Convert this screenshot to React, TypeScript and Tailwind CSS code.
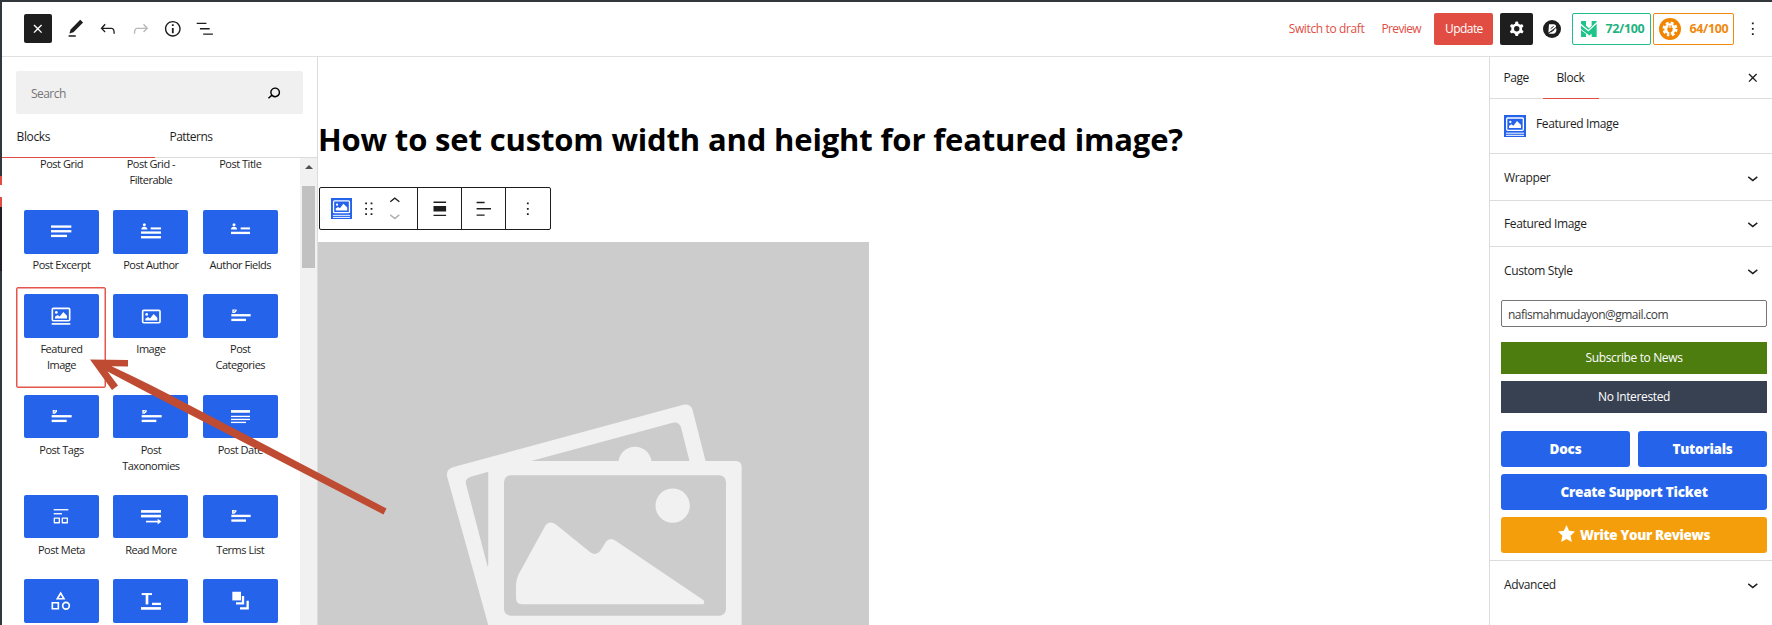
import type { ReactNode } from "react";

const P = {
  close: "M12 13.06l3.712 3.713 1.061-1.06L13.061 12l3.712-3.712-1.06-1.06L12 10.938 8.288 7.227l-1.061 1.06L10.939 12l-3.712 3.712 1.06 1.061L12 13.061z",
  edit: "M20.1 5.1L16.9 2 6.2 12.7l-1.3 4.4 4.5-1.3 10.7-10.7zM4 20.8h8v-1.5H4v1.5z",
  undo: "M18.3 11.7c-.6-.6-1.4-.9-2.3-.9H6.7l2.9-3.3-1.1-1-4.5 5L8.5 16l1-1-2.7-2.7H16c.5 0 .9.2 1.3.5 1 1 1 3.4 1 4.5v.3h1.5v-.2c0-1.5 0-4.3-1.5-5.7z",
  redo: "M15.6 6.5l-1.1 1 2.9 3.3H8c-.9 0-1.7.3-2.3.9-1.4 1.5-1.4 4.2-1.4 5.6v.2h1.5v-.3c0-1.1 0-3.5 1-4.5.3-.3.7-.5 1.3-.5h9.2L14.5 15l1.1 1.1 4.6-4.6-4.6-5z",
  info: "M12 3.2c-4.8 0-8.8 3.9-8.8 8.8 0 4.8 3.9 8.8 8.8 8.8 4.8 0 8.8-3.9 8.8-8.8 0-4.8-4-8.8-8.8-8.8zm0 16c-4 0-7.2-3.3-7.2-7.2C4.8 8 8 4.8 12 4.8s7.2 3.3 7.2 7.2c0 4-3.2 7.2-7.2 7.2zM11 17h2v-6h-2v6zm0-8h2V7h-2v2z",
  list: "M13.8 5.2H3v1.5h10.8V5.2zm-3.6 12v1.5H21v-1.5H10.2zm7.2-6H6.6v1.5h10.8v-1.5z",
  search: "M13.5 6C10.5 6 8 8.5 8 11.5c0 1.1.3 2.1.9 3l-3.4 3 1 1.1 3.4-2.9c1 .9 2.2 1.4 3.6 1.4 3 0 5.5-2.5 5.5-5.5C19 8.5 16.5 6 13.5 6zm0 9.5c-2.2 0-4-1.8-4-4s1.8-4 4-4 4 1.8 4 4-1.8 4-4 4z",
  down: "M17.5 11.6L12 16l-5.5-4.4.9-1.2L12 14l4.5-3.6 1 1.2z",
  up: "M6.5 12.4L12 8l5.5 4.4-.9 1.2L12 10l-4.5 3.6-1-1.2z",
  more: "M13 19h-2v-2h2v2zm0-6h-2v-2h2v2zm0-6h-2V5h2v2z",
  drag: "M8 7h2V5H8v2zm0 6h2v-2H8v2zm0 6h2v-2H8v2zm6-14v2h2V5h-2zm0 8h2v-2h-2v2zm0 6h2v-2h-2v2z",
  alignNone: "M19 5.5H5V4h14v1.5ZM19 20H5v-1.5h14V20ZM5 9h14v6H5V9Z",
  alignLeft: "M4 19.8h8.9v-1.5H4v1.5zm8.9-15.6H4v1.5h8.9V4.2zm-8.9 7v1.5h16v-1.5H4z",
  cog: "M10.289 4.836A1 1 0 0111.275 4h1.306a1 1 0 01.987.836l.244 1.466c.787.26 1.503.679 2.108 1.218l1.393-.522a1 1 0 011.216.437l.653 1.13a1 1 0 01-.23 1.273l-1.148.944a6.025 6.025 0 010 2.435l1.149.946a1 1 0 01.23 1.272l-.653 1.13a1 1 0 01-1.216.437l-1.394-.522c-.605.54-1.32.958-2.108 1.218l-.244 1.466a1 1 0 01-.987.836h-1.306a1 1 0 01-.986-.836l-.244-1.466a5.995 5.995 0 01-2.108-1.218l-1.394.522a1 1 0 01-1.217-.436l-.653-1.131a1 1 0 01.23-1.272l1.149-.946a6.026 6.026 0 010-2.435l-1.148-.944a1 1 0 01-.23-1.272l.653-1.131a1 1 0 011.217-.437l1.393.522a5.994 5.994 0 012.108-1.218l.244-1.466zM14.929 12a3 3 0 11-6 0 3 3 0 016 0z",
};

function Icon({ d, className = "" }: { d: string; className?: string }) {
  return (
    <svg viewBox="0 0 24 24" className={`h-[21.6px] w-[21.6px] shrink-0 ${className}`} fill="currentColor" fillRule="evenodd">
      <path d={d} />
    </svg>
  );
}

function FeaturedIcon({ className = "" }: { className?: string }) {
  return (
    <svg viewBox="0 0 66 66" className={`shrink-0 ${className}`}>
      <rect width="66" height="66" fill="#2563eb" />
      <rect x="8" y="9" width="50" height="37" rx="3" fill="none" stroke="#fff" strokeWidth="4" />
      <circle cx="19" cy="21" r="3.5" fill="#fff" />
      <path d="M15 39v-6l7-5 6 4 11-14 12 12v9z" fill="#fff" />
      <path d="M6 54.5h54M6 61h54" stroke="#fff" strokeWidth="3" />
    </svg>
  );
}

const bars = (...r: number[][]) => r.map(([x, y, w, h], i) => <rect key={i} x={x} y={y} width={w} height={h} />);
const person = (x: number) => (
  <>
    <circle cx={x} cy="44" r="4.5" />
    <path d={`M${x - 9} 58q0-8 9-8t9 8z`} />
  </>
);
const tag = (x: number, y: number) => (
  <>
    <path d={`M${x} ${y + 1}h13v5l-6 6h-7z`} />
    <path d={`M${x + 4} ${y + 8}l5-6`} stroke="#2563eb" strokeWidth="2" />
  </>
);
const picture = (x: number, y: number) => (
  <>
    <rect x={x} y={y} width="52" height="37" rx="3" fill="none" stroke="#fff" strokeWidth="5" />
    <circle cx={x + 12} cy={y + 12} r="4" />
    <path d={`M${x + 8} ${y + 30}v-5l8-5 6 4 11-13 11 11v8z`} />
  </>
);

type Item = { label: string[]; icon: ReactNode; selected?: boolean };
const items: Item[] = [
  { label: ["Post Excerpt"], icon: bars([81, 46, 61, 7], [81, 60, 61, 7], [81, 74, 48, 7]) },
  { label: ["Post Author"], icon: <>{person(94)}{bars([113, 52, 31, 6], [84, 64, 60, 7], [84, 78, 60, 7])}</> },
  { label: ["Author Fields"], icon: <>{person(93)}{bars([113, 52, 28, 6], [84, 65, 57, 7])}</> },
  { label: ["Featured", "Image"], selected: true, icon: <>{picture(85, 43)}{bars([83, 87, 56, 5])}</> },
  { label: ["Image"], icon: picture(89, 49) },
  { label: ["Post", "Categories"], icon: <>{tag(88, 45)}{bars([85, 60, 58, 7], [85, 74, 44, 7])}</> },
  { label: ["Post Tags"], icon: <>{tag(86, 44)}{bars([83, 60, 60, 7], [83, 74, 45, 7])}</> },
  { label: ["Post", "Taxonomies"], icon: <>{tag(88, 44)}{bars([86, 60, 60, 7], [86, 74, 44, 7])}</> },
  { label: ["Post Date"], icon: bars([84, 45, 57, 8], [84, 62, 57, 4], [84, 71, 57, 4], [84, 80, 45, 4]) },
  { label: ["Post Meta"], icon: <>{bars([89, 42, 44, 4], [89, 54, 25, 4])}<path d="M91 69h15v14H91zM115 69h15v14h-15z" fill="none" stroke="#fff" strokeWidth="4" strokeLinejoin="round" /></> },
  { label: ["Read More"], icon: <>{bars([84, 45, 60, 8], [84, 59, 60, 8], [99, 77, 40, 5])}<path d="M134 71l11 8.500-11 8.500z" /></> },
  { label: ["Terms List"], icon: <>{tag(87, 44)}{bars([85, 59, 58, 7], [85, 73, 44, 7])}</> },
  { label: [], icon: <path d="M110 42l-10 17h20zM85 71h18v18H85zM116 80a10 10 0 1 0 20 0a10 10 0 1 0-20 0z" fill="none" stroke="#fff" strokeWidth="5" /> },
  { label: [], icon: bars([86, 42, 31, 6], [98, 42, 8, 34], [117, 71, 27, 7], [84, 84, 60, 8]) },
  { label: [], icon: <>{bars([88, 38, 26, 26])}<path d="M120 51v22H99M134 65v23h-23" fill="none" stroke="#fff" strokeWidth="7" /></> },
];

function Lines({ lines }: { lines: string[] }) {
  return (
    <div className="text-center text-[11px] leading-4 tracking-[-0.48px] text-[#1e1e1e]">
      {lines.map((l) => <div key={l} className="whitespace-nowrap">{l}</div>)}
    </div>
  );
}

function Panel({ title, className = "" }: { title: string; className?: string }) {
  return (
    <div className={`flex items-center justify-between pl-[14px] pr-2 ${className}`}>
      <span className="pt-px">{title}</span>
      <Icon d={P.down} className="mt-px" />
    </div>
  );
}

export default function App() {
  return (
    <div className="relative flex h-[625px] w-[1772px] flex-col overflow-hidden border-t-2 border-[#32373c] bg-white font-['Open_Sans','Noto_Sans',sans-serif] text-[12px] tracking-[-0.37px] text-[#1e1e1e]">
      <div className="flex min-h-0 flex-1">
        <div className="flex w-[2px] shrink-0 flex-col bg-[#32373c]">
          <div className="h-[174px]" />
          <div className="h-[9px] bg-[#e14d43]" />
          <div className="h-[12px] bg-white" />
          <div className="h-[10px] bg-[#e14d43]" />
          <div className="h-[64px] bg-[#1d2127]" />
        </div>

        <div className="flex min-w-0 flex-1 flex-col">
          <header className="flex h-[55px] shrink-0 items-center border-b border-[#e0e0e0] pl-[22px]">
            <button className="-mt-px flex h-[29px] w-7 items-center justify-center rounded-[2px] bg-[#1e1e1e] text-white">
              <Icon d={P.close} className="mt-px" />
            </button>
            <div className="ml-[7.500px] flex">
              {[P.edit, P.undo, P.redo, P.info, P.list].map((d, i) => (
                <span key={d} className={`flex w-[32.4px] justify-center ${i === 2 ? "text-[#b8b8b8]" : ""}`}>
                  <Icon d={d} />
                </span>
              ))}
            </div>
            <div className="ml-auto flex items-center">
              <span className="mr-[17px] text-[#e14d43]">Switch to draft</span>
              <span className="mr-[13px] w-[40px] tracking-[-0.62px] text-[#e14d43]">Preview</span>
              <button className="mr-[7px] h-8 w-[59px] rounded-[2px] bg-[#e14d43] tracking-[-0.55px] text-white">Update</button>
              <button className="mr-[10px] flex h-8 w-[33px] items-center justify-center rounded-[2px] bg-[#1e1e1e] text-white">
                <Icon d={P.cog} />
              </button>
              <svg viewBox="0 0 54 54" className="mr-[11px] h-[18px] w-[18px]">
                <circle cx="27" cy="27" r="27" fill="#1e1e1e" />
                <path d="M18 13h14q8 1 7 8l-23 17zM39 24q2 3 1 8-2 9-10 9H17z" fill="#fff" />
                <path d="M23 26l9-7M24 36l10-7" stroke="#1e1e1e" strokeWidth="3" />
              </svg>
              <div className="mr-[2px] flex h-8 w-[79px] items-center rounded-[2px] border border-[#1fbf86] pl-[8px] text-[#1fb381]">
                <svg viewBox="0 0 48 48" className="h-4 w-4" fill="#1fc48b">
                  <path d="M0 0h15v14l9 8 8-8V0h15v48H32V38l-8 6-9-6v10H0z" />
                  <path d="M-2 9l24 20L50 3" fill="none" stroke="#fff" strokeWidth="4" />
                  <path d="M-2 24l26 20" fill="none" stroke="#fff" strokeWidth="3" />
                </svg>
                <span className="ml-[8px] text-[12.5px] font-bold tracking-[-0.32px]">72/100</span>
              </div>
              <div className="mr-[8px] flex h-8 w-[81px] items-center rounded-[2px] border border-[#f08a0c] pl-[5px] text-[#ef8a10]">
                <svg viewBox="0 0 66 66" className="h-[22px] w-[22px]">
                  <circle cx="33" cy="33" r="33" fill="#f18500" />
                  <circle cx="33" cy="33" r="17" fill="#fff" />
                  <circle cx="33" cy="33" r="19" fill="none" stroke="#fff" strokeWidth="7" strokeDasharray="8.500 6.420" />
                  <path d="M25 29h16v7q-1 6-6 7v14h-4V43q-5-1-6-7zM28 22h3v7h-3zM35 22h3v7h-3z" fill="#f18500" />
                </svg>
                <span className="ml-[8px] text-[12.5px] font-bold tracking-[-0.32px]">64/100</span>
              </div>
              <Icon d={P.more} className="mr-[8px]" />
            </div>
          </header>

          <div className="flex min-h-0 flex-1">
            <aside className="flex w-[316px] shrink-0 flex-col border-r border-[#dcdcdc]">
              <div className="ml-[14px] mr-[14px] mt-[14px] flex h-[43px] shrink-0 items-center justify-between rounded-[2px] bg-[#f0f0f0] pl-[15px] pr-[18px]">
                <span className="pt-0.5 tracking-[-0.55px] text-[#757575]">Search</span>
                <Icon d={P.search} className="text-black" />
              </div>
              <div className="flex h-[44px] shrink-0 border-b border-[#dcdcdc]">
                <div className="-mb-px w-[153px] border-b-[1.5px] border-[#e14d43] pl-[14.500px] pt-[14px]">Blocks</div>
                <div className="pl-[14.500px] pt-[14px] tracking-[-0.52px]">Patterns</div>
              </div>
              <div className="flex min-h-0 flex-1">
                <div className="flex-1 pl-[22px]">
                  <div className="-mt-[2px] grid h-[54px] grid-cols-[75px_75px_75px] gap-x-[14.400px]">
                    <Lines lines={["Post Grid"]} />
                    <Lines lines={["Post Grid -", "Filterable"]} />
                    <Lines lines={["Post Title"]} />
                  </div>
                  <div className="grid grid-cols-[75px_75px_75px] gap-x-[14.400px]">
                    {items.map((it, i) => (
                      <div key={i} className="relative pb-[21.1px]">
                        {it.selected && <div className="absolute -left-[8px] -top-[7px] h-[101px] w-[90px] rounded-[2px] border-[1.5px] border-[#e5554c] shadow-[inset_0_0_0_0.5px_#e5554c]" />}
                        <svg viewBox="0 0 225 130" className="mb-[3.700px] block h-[43.5px] w-[75px] rounded-[2px] bg-[#2563eb]" fill="#fff">
                          {it.icon}
                        </svg>
                        <Lines lines={it.label} />
                      </div>
                    ))}
                  </div>
                </div>
                <div className="flex w-[17px] shrink-0 flex-col items-center bg-[#f1f1f1] pt-[7px]">
                  <svg viewBox="0 0 8 4" className="h-1 w-2 shrink-0" fill="#505050"><path d="M0 4L4 0l4 4z" /></svg>
                  <div className="mt-[17px] h-[82px] w-[13px] bg-[#c1c1c1]" />
                </div>
              </div>
            </aside>

            <main className="flex min-w-0 flex-1 flex-col">
              <h1 className="mt-[61px] whitespace-nowrap text-[31px] font-bold leading-[42px] tracking-[-0.16px] text-black">
                How to set custom width and height for featured image?
              </h1>
              <div className="ml-[1px] mt-[27px] flex h-[43px] w-[232px] shrink-0 divide-x divide-[#1e1e1e] rounded-[2px] border border-[#1e1e1e]">
                <div className="flex w-[98px] items-center pl-[11px]">
                  <FeaturedIcon className="h-[21px] w-[21px]" />
                  <Icon d={P.drag} className="ml-[5.500px]" />
                  <div className="ml-[5px] flex flex-col">
                    <Icon d={P.up} className="-mb-[7px]" />
                    <Icon d={P.down} className="text-[#b0b0b0]" />
                  </div>
                </div>
                <div className="flex w-[44px] items-center justify-center"><Icon d={P.alignNone} /></div>
                <div className="flex w-[44px] items-center justify-center"><Icon d={P.alignLeft} /></div>
                <div className="flex flex-1 items-center justify-center"><Icon d={P.more} /></div>
              </div>
              <svg viewBox="0 0 551 383" className="mt-[12px] h-[383px] w-[551px] shrink-0">
                <rect width="551" height="383" fill="#ccc" />
                <g transform="translate(112 148) scale(.3333)" fill="#f1f1f1">
                  <path d="M179 720L52 262Q46 240 68 232L760 44Q780 40 787 57L827 214V720z" />
                  <g fill="#ccc">
                    <path d="M295 215L728 98Q747 94 753 112L779 215zM175 245L122 260Q104 266 108 282L173 530L175 525z" />
                  </g>
                  <circle cx="615" cy="220" r="50" />
                  <path d="M176 213H917Q935 213 935 231V720H176z" />
                  <rect x="222" y="256" width="666" height="421" rx="20" fill="#ccc" />
                  <circle cx="728" cy="347" r="51.500" />
                  <path d="M258 590Q258 568 268 549L345 409Q357 390 377 403L481 487Q497 499 510 484L528 455Q540 440 558 453L820 630Q826 637 820 643H278Q258 643 258 623z" />
                </g>
              </svg>
            </main>

            <aside className="flex w-[283px] shrink-0 flex-col border-l border-[#dcdcdc]">
              <div className="flex h-[42px] shrink-0 items-start border-b border-[#dcdcdc]">
                <span className="w-[53px] pl-[13.500px] pt-[12px] tracking-[-0.5px]">Page</span>
                <span className="h-[42px] w-[56px] border-b-[1.5px] border-[#e14d43] pl-[13.500px] pt-[12px] tracking-[-0.42px]">Block</span>
                <Icon d={P.close} className="ml-auto mr-[8px] mt-[10px]" />
              </div>
              <div className="flex h-[55px] shrink-0 items-start border-b border-[#dcdcdc] pl-[14px]">
                <FeaturedIcon className="mt-4 h-[22px] w-[22px]" />
                <span className="ml-[10px] mt-[16px]">Featured Image</span>
              </div>
              <Panel title="Wrapper" className="h-[47px] shrink-0 border-b border-[#dcdcdc]" />
              <Panel title="Featured Image" className="h-[46px] shrink-0 border-b border-[#dcdcdc]" />
              <Panel title="Custom Style" className="h-[46px] shrink-0" />
              <div className="flex shrink-0 flex-col border-b border-[#dcdcdc] pb-[7px] pl-[11px] pr-[5px] pt-[7px] text-white">
                <div className="flex h-[27px] items-center rounded-[2px] border border-[#757575] pl-[6px] pt-[3px] tracking-[-0.53px] text-[#3c3c3c]">nafismahmudayon@gmail.com</div>
                <button className="mt-[15px] h-8 bg-[#4d7c0f]">Subscribe to News</button>
                <button className="mt-[7px] h-8 bg-[#374151]">No Interested</button>
                <div className="mt-[18px] grid grid-cols-2 gap-2 text-[13.5px] font-extrabold tracking-[-0.25px]">
                  <button className="h-9 rounded-[3px] bg-[#2563eb]">Docs</button>
                  <button className="h-9 rounded-[3px] bg-[#2563eb]">Tutorials</button>
                </div>
                <button className="mt-[7px] h-9 rounded-[3px] bg-[#2563eb] text-[13.5px] font-extrabold tracking-[-0.22px]">Create Support Ticket</button>
                <button className="mt-[7px] flex h-9 items-center justify-center rounded-[3px] bg-[#f59e0b] text-[13.5px] font-extrabold tracking-[-0.38px]">
                  <svg viewBox="0 0 20 20" className="-mt-1 mr-[5px] h-[17px] w-[17px]" fill="#fff"><path d="M10 0l3 6.700 7 .8-5.200 5 1.500 7.500L10 16.400 3.700 20l1.500-7.500L0 7.500l7-.8z" /></svg>
                  Write Your Reviews
                </button>
              </div>
              <Panel title="Advanced" className="h-[47px] shrink-0" />
            </aside>
          </div>
        </div>
      </div>

      <svg viewBox="0 0 1772 625" className="pointer-events-none absolute -top-[2px] left-0 h-[625px] w-[1772px]">
        <path d="M90 359.500L128 360V366.500L111.500 366.200Q150 384 190 405.500L386.500 508.500L383.500 514.500L186 412.500Q148 393 107.500 371.500L118 385.500L112 390z" fill="#be4b32" />
      </svg>
    </div>
  );
}
